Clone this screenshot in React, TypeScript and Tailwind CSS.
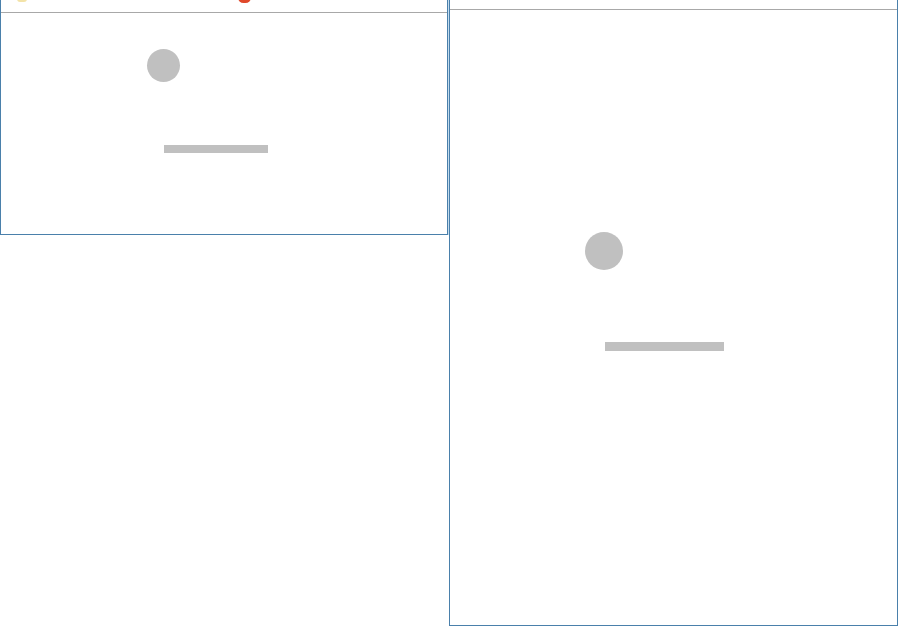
export default function App() {
  return (
    <div className="flex w-[898px] h-[627px] bg-white overflow-hidden">
      {/* left window */}
      <div className="flex flex-col w-[448px] h-[235px] border-x border-b border-[#4a80ab] bg-white shrink-0">
        <div className="relative h-[13px] border-b border-[#a8a8a8] shrink-0">
          <div className="absolute left-[16px] top-[-4px] w-[10px] h-[6px] bg-[#f3e3a8] rounded-sm" />
          <div className="absolute left-[237px] top-[-8px] w-[13px] h-[11px] bg-[#e0482b] rounded-full" />
        </div>
        <div className="flex flex-col">
          <div className="ml-[146px] mt-[36px] w-[33px] h-[33px] rounded-full bg-[#c0c0c0]" />
          <div className="ml-[163px] mt-[63px] w-[104px] h-[8px] bg-[#c0c0c0]" />
        </div>
      </div>
      <div className="w-px h-[235px] bg-[#c4dcef] shrink-0" />
      {/* right window */}
      <div className="flex flex-col w-[449px] h-[626px] border-x border-b border-[#4a80ab] bg-white shrink-0">
        <div className="h-[10px] border-b border-[#a8a8a8] shrink-0" />
        <div className="flex flex-col">
          <div className="ml-[135px] mt-[222px] w-[38px] h-[38px] rounded-full bg-[#c0c0c0]" />
          <div className="ml-[155px] mt-[72px] w-[119px] h-[9px] bg-[#c0c0c0]" />
        </div>
      </div>
    </div>
  );
}
